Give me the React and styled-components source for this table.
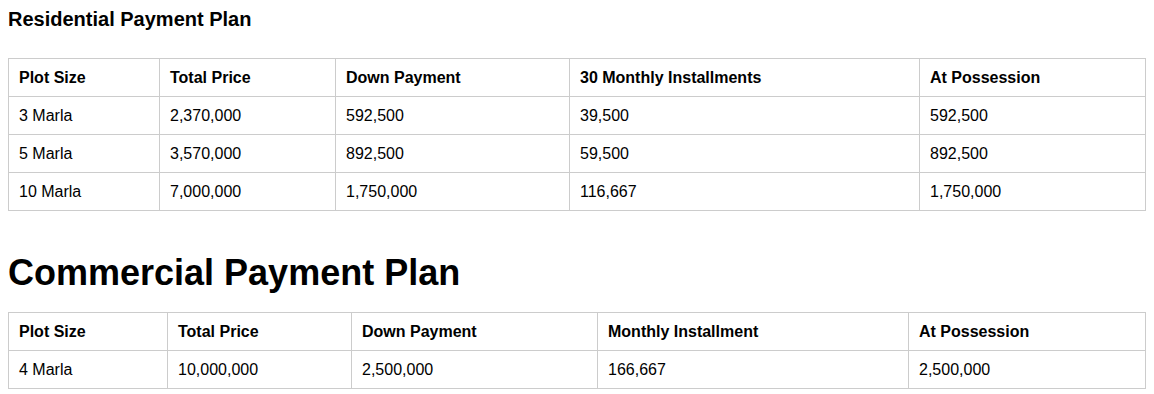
import React from 'react';
import styled, { createGlobalStyle } from 'styled-components';

const GlobalStyle = createGlobalStyle`
  body {
    margin: 8px;
    background: #fff;
    color: #000;
    font-family: 'Liberation Sans', Arial, sans-serif;
  }
`;

const SectionTitle = styled.h3`
  margin: 0 0 27px;
  font-size: 20px;
  font-weight: 700;
`;

const BigTitle = styled.h1`
  margin: 41px 0 18px;
  font-size: 36px;
  font-weight: 700;
`;

const PlanTable = styled.table`
  width: 100%;
  border-collapse: collapse;
  table-layout: fixed;
  font-size: 16px;
  line-height: 17px;
`;

const Col = styled.col`
  width: ${(p) => (p.$w ? `${p.$w}px` : 'auto')};
`;

const HeadCell = styled.th`
  border: 1px solid #ccc;
  padding: 10px;
  text-align: left;
  font-weight: 700;
`;

const Cell = styled.td`
  border: 1px solid #ccc;
  padding: 10px;
`;

const residential = {
  widths: [151, 176, 234, 350, null],
  head: ['Plot Size', 'Total Price', 'Down Payment', '30 Monthly Installments', 'At Possession'],
  rows: [
    ['3 Marla', '2,370,000', '592,500', '39,500', '592,500'],
    ['5 Marla', '3,570,000', '892,500', '59,500', '892,500'],
    ['10 Marla', '7,000,000', '1,750,000', '116,667', '1,750,000'],
  ],
};

const commercial = {
  widths: [159, 184, 246, 311, null],
  head: ['Plot Size', 'Total Price', 'Down Payment', 'Monthly Installment', 'At Possession'],
  rows: [['4 Marla', '10,000,000', '2,500,000', '166,667', '2,500,000']],
};

const Plan = ({ data }) => (
  <PlanTable>
    <colgroup>
      {data.widths.map((w, i) => (
        <Col key={i} $w={w} />
      ))}
    </colgroup>
    <thead>
      <tr>
        {data.head.map((h) => (
          <HeadCell key={h}>{h}</HeadCell>
        ))}
      </tr>
    </thead>
    <tbody>
      {data.rows.map((row) => (
        <tr key={row[0]}>
          {row.map((c, i) => (
            <Cell key={i}>{c}</Cell>
          ))}
        </tr>
      ))}
    </tbody>
  </PlanTable>
);

export default function App() {
  return (
    <>
      <GlobalStyle />
      <SectionTitle>Residential Payment Plan</SectionTitle>
      <Plan data={residential} />
      <BigTitle>Commercial Payment Plan</BigTitle>
      <Plan data={commercial} />
    </>
  );
}
